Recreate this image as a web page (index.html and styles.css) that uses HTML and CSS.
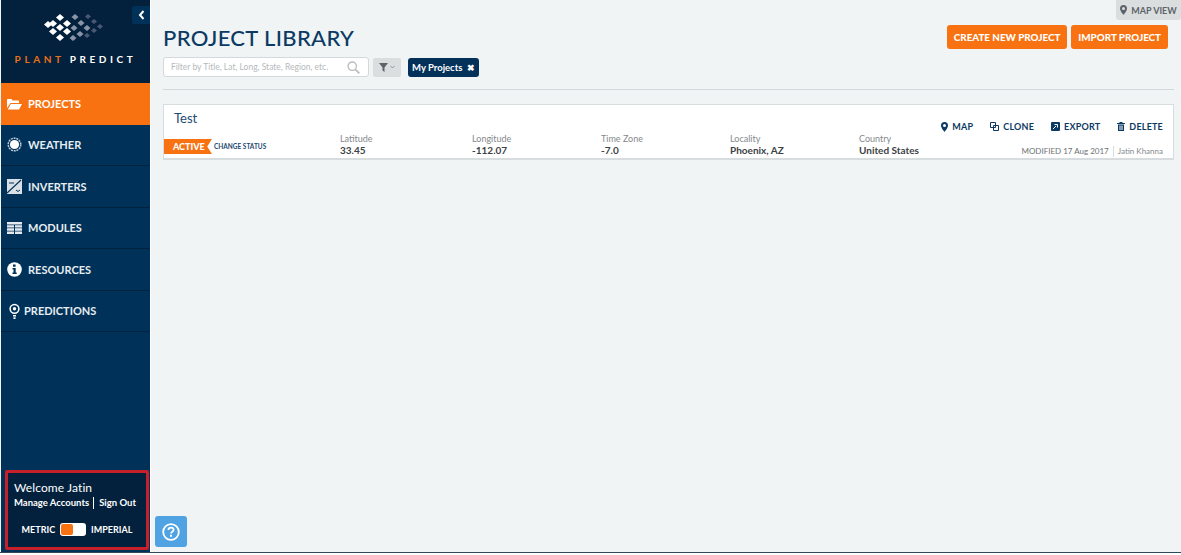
FILE: index.html
```html
<!DOCTYPE html>
<html lang="en">

<head>
    <meta charset="UTF-8">
    <title>Project Library</title>
    <link rel="stylesheet" href="styles.css">
</head>

<body>
    <div class="wrapper">
        <aside class="sidebar">
            <div class="logoArea">
                <button class="collapseBtn">
                    <svg width="7" height="10" viewBox="0 0 7 10"><path d="M5.5 1 2 5l3.500 4" fill="none" stroke="#fff" stroke-width="2"/></svg>
                </button>
                <svg class="logoMark" width="62" height="27" viewBox="0 0 62 27">
                    <g fill="#fff">
                        <path d="M16 0l4 3.500-4 3.500-4-3.500z"/>
                        <path d="M9 6l4 3.500-4 3.500-4-3.500z"/>
                        <path d="M23 6l4 3.500-4 3.500-4-3.500z"/>
                        <path d="M4 10l4 3.500-4 3.500-4-3.500z" transform="translate(-0 -3)"/>
                        <path d="M16 7l4 3.500-4 3.500-4-3.500z" transform="translate(0 3)"/>
                        <path d="M9 14l4 3.500-4 3.500-4-3.500z"/>
                        <path d="M23 14l4 3.500-4 3.500-4-3.500z"/>
                        <path d="M16 20l4 3.500-4 3.500-4-3.500z"/>
                    </g>
                    <g fill="#8a94a8">
                        <path d="M31 0l3.500 3-3.500 3-3.500-3z"/>
                        <path d="M37 6l3.500 3-3.500 3-3.500-3z"/>
                        <path d="M30 11l3.500 3-3.500 3-3.500-3z"/>
                        <path d="M43 11l3.500 3-3.500 3-3.500-3z"/>
                        <path d="M36 17l3.500 3-3.500 3-3.500-3z"/>
                        <path d="M29 21l3.500 3-3.500 3-3.500-3z"/>
                    </g>
                    <g fill="#4c5873">
                        <path d="M44 0l3 2.500-3 2.500-3-2.500z"/>
                        <path d="M50 5l3 2.500-3 2.500-3-2.500z"/>
                        <path d="M56 10l3 2.500-3 2.500-3-2.500z"/>
                        <path d="M50 14l3 2.500-3 2.500-3-2.500z"/>
                        <path d="M43 19l3 2.500-3 2.500-3-2.500z"/>
                    </g>
                </svg>
                <div class="logoText"><span class="logoOrange">PLANT</span><span>PREDICT</span></div>
            </div>
            <nav>
                <a class="navItem active">
                    <svg class="navIcon" width="15" height="12" viewBox="0 0 15 12"><path d="M0 2c0-.6.4-1 1-1h3.500l1 1.500H11c.6 0 1 .4 1 1V5H3.500L0 10z" fill="#fff"/><path d="M3.900 6H15l-3 5.500H.8z" fill="#fff"/></svg>
                    PROJECTS
                </a>
                <a class="navItem">
                    <svg class="navIcon" width="15" height="15" viewBox="0 0 15 15"><circle cx="7.500" cy="7.500" r="4.600" fill="#fff"/><circle cx="7.500" cy="7.500" r="6.300" fill="none" stroke="#c5d0da" stroke-width="1.400" stroke-dasharray="2 .8"/></svg>
                    WEATHER
                </a>
                <a class="navItem">
                    <svg class="navIcon" width="15" height="15" viewBox="0 0 15 15"><rect width="15" height="15" fill="#d9e0e6"/><path d="M0 14 14 1" stroke="#003259" stroke-width="1.200"/><path d="M2 4h5M9 11l2 1.500 2-1.500" stroke="#003259" fill="none"/></svg>
                    INVERTERS
                </a>
                <a class="navItem">
                    <svg class="navIcon" width="15" height="12" viewBox="0 0 15 12"><g fill="#e4e9ee"><path d="M0 0h15v2.500H0zM0 3.200h7v2.400H0zM8 3.200h7v2.400H8zM0 6.300h7v2.400H0zM8 6.300h7v2.400H8zM0 9.400h7V12H0zM8 9.400h7V12H8z"/></g></svg>
                    MODULES
                </a>
                <a class="navItem">
                    <svg class="navIcon" width="15" height="15" viewBox="0 0 15 15"><circle cx="7.500" cy="7.500" r="7.300" fill="#fff"/><path d="M6 2.600h2.600v2.200H6zM5.500 6h3.200v4.400h1v1.500H5.500v-1.500h1V7.500h-1z" fill="#003259"/></svg>
                    RESOURCES
                </a>
                <a class="navItem predictions">
                    <svg class="navIcon" width="11" height="16" viewBox="0 0 11 16"><circle cx="5.500" cy="5.800" r="4.400" fill="none" stroke="#fff" stroke-width="1.500"/><circle cx="5.500" cy="5.800" r="1.700" fill="#fff"/><path d="M4 12h3v1.500H4zM4.500 14.200h2V16h-2z" fill="#fff"/></svg>
                    PREDICTIONS
                </a>
            </nav>
            <div class="accountBox">
                <div class="welcome">Welcome Jatin</div>
                <div class="accountLinks"><a>Manage Accounts</a><a class="signOut">Sign Out</a></div>
                <div class="unitRow">
                    <span>METRIC</span>
                    <span class="unitSwitch"><i class="unitKnob"></i></span>
                    <span>IMPERIAL</span>
                </div>
            </div>
        </aside>

        <main class="content">
            <a class="mapView">
                <svg width="7" height="10" viewBox="0 0 7 10"><path fill-rule="evenodd" d="M3.500 0A3.500 3.500 0 0 1 7 3.500C7 6 3.500 10 3.500 10S0 6 0 3.500A3.500 3.500 0 0 1 3.500 0zm0 2a1.500 1.500 0 1 0 0 3 1.500 1.500 0 0 0 0-3z" fill="#5d6469"/></svg>
                MAP VIEW
            </a>
            <header class="topArea">
                <div class="titleArea">
                    <h1>PROJECT LIBRARY</h1>
                    <div class="filterRow">
                        <div class="searchBox">
                            <span>Filter by Title, Lat, Long, State, Region, etc.</span>
                            <svg width="13" height="13" viewBox="0 0 13 13"><circle cx="5.200" cy="5.200" r="4.200" fill="none" stroke="#b9bdc0" stroke-width="1.300"/><path d="M8.300 8.300 12.300 12.300" stroke="#b9bdc0" stroke-width="1.800"/></svg>
                        </div>
                        <button class="filterBtn">
                            <svg width="9" height="9" viewBox="0 0 9 9"><path d="M0 0h9L5.500 4.500V9l-2-1.500v-3z" fill="#5d6469"/></svg>
                            <svg width="5" height="4" viewBox="0 0 5 4"><path d="M.5 1l2 2 2-2" fill="none" stroke="#7c8388" stroke-width=".8"/></svg>
                        </button>
                        <span class="tag">My Projects <b>✖</b></span>
                    </div>
                </div>
                <div class="actions">
                    <button class="orangeBtn">CREATE NEW PROJECT</button>
                    <button class="orangeBtn">IMPORT PROJECT</button>
                </div>
            </header>
            <hr class="divider">

            <article class="projectCard">
                <div class="cardTop">
                    <h2>Test</h2>
                    <div class="cardLinks">
                        <a><svg width="7" height="10" viewBox="0 0 7 10"><path fill-rule="evenodd" d="M3.500 0A3.500 3.500 0 0 1 7 3.500C7 6 3.500 10 3.500 10S0 6 0 3.500A3.500 3.500 0 0 1 3.500 0zm0 2a1.500 1.500 0 1 0 0 3 1.500 1.500 0 0 0 0-3z" fill="#0b3a63"/></svg>MAP</a>
                        <a><svg width="9" height="9" viewBox="0 0 9 9"><path d="M.5.5h5v5h-5zM3.500 3.500h5v5h-5z" fill="none" stroke="#0b3a63"/></svg>CLONE</a>
                        <a><svg width="9" height="9" viewBox="0 0 9 9"><rect width="9" height="9" rx="1" fill="#0b3a63"/><path d="M2 7l3-3M3.500 2.500H6.500V5.500" stroke="#fff" fill="none"/></svg>EXPORT</a>
                        <a><svg width="8" height="9" viewBox="0 0 8 9"><path d="M0 1h8v1H0zM2.500 0h3v1h-3zM1 2.500h6V9H1zM2.500 3.500v4.500h1V3.500zM4.500 3.500v4.500h1V3.500z" fill="#0b3a63" fill-rule="evenodd"/></svg>DELETE</a>
                    </div>
                </div>
                <div class="cardBottom">
                    <div class="statusArea">
                        <span class="activeFlag">ACTIVE</span>
                        <a class="changeStatus">CHANGE STATUS</a>
                    </div>
                    <div class="field latitude"><label>Latitude</label><strong>33.45</strong></div>
                    <div class="field longitude"><label>Longitude</label><strong>-112.07</strong></div>
                    <div class="field timezone"><label>Time Zone</label><strong>-7.0</strong></div>
                    <div class="field locality"><label>Locality</label><strong>Phoenix, AZ</strong></div>
                    <div class="field country"><label>Country</label><strong>United States</strong></div>
                    <div class="modified">MODIFIED 17 Aug 2017<span class="owner">Jatin Khanna</span></div>
                </div>
            </article>
        </main>

        <button class="helpBtn">
            <svg width="18" height="18" viewBox="0 0 18 18"><circle cx="9" cy="9" r="7.800" fill="none" stroke="#fff" stroke-width="1.800"/><path d="M6.400 7c0-1.600 1.200-2.400 2.600-2.400s2.600.8 2.600 2.200c0 2-2.500 1.900-2.500 3.700" fill="none" stroke="#fff" stroke-width="1.700"/><path d="M8 11.700h2v2H8z" fill="#fff"/></svg>
        </button>
    </div>
</body>

</html>
```

FILE: styles.css
```css
* {
    margin: 0;
    padding: 0;
    box-sizing: border-box;
}

body {
    width: 100vw;
    height: 100vh;
    overflow: hidden;
    background: #fff;
    font-family: "Lato", "Liberation Sans", sans-serif;
}

.wrapper {
    position: relative;
    display: flex;
    height: 553px;
    background: #f0f4f5;
    border-bottom: 1px solid #33475a;
}

a {
    cursor: pointer;
}

button {
    border: none;
    cursor: pointer;
    font-family: inherit;
}

/* sidebar */
.sidebar {
    width: 150px;
    margin-left: 1px;
    flex-shrink: 0;
    display: flex;
    flex-direction: column;
    background: #003259;
    border-right: 1px solid #fff;
}

.logoArea {
    position: relative;
    height: 83px;
    background: #03213d;
    display: flex;
    flex-direction: column;
    align-items: center;
    padding-top: 14px;
}

.collapseBtn {
    position: absolute;
    top: 6px;
    right: 0;
    width: 18px;
    height: 18px;
    background: #003259;
    border-radius: 2px 0 0 2px;
    display: flex;
    align-items: center;
    justify-content: center;
}

.logoMark {
    margin-right: 1px;
}

.logoText {
    margin-top: 12px;
    font-size: 10px;
    font-weight: 700;
    letter-spacing: 3.6px;
    color: #fff;
    white-space: nowrap;
}

.logoOrange {
    color: #e8701a;
    margin-right: 5px;
}

.navItem {
    height: 41.5px;
    padding-left: 6px;
    display: flex;
    align-items: center;
    gap: 6px;
    font-size: 11px;
    font-weight: 700;
    color: #e6edf2;
    border-bottom: 1px solid #02233f;
}

.navItem.active {
    background: #f87211;
    color: #fff;
    border-bottom: none;
}

.predictions {
    padding-left: 8px;
    gap: 4px;
}

.navIcon {
    flex-shrink: 0;
}

.accountBox {
    margin: auto 0 2px 4px;
    width: 144px;
    height: 80px;
    padding: 7px 7px 0 6px;
    background: #03213d;
    border: 3px solid #c8202a;
    border-radius: 2px;
    color: #fff;
}

.welcome {
    font-size: 12px;
    line-height: 15px;
    letter-spacing: .1px;
}

.accountLinks {
    margin-top: 2px;
    display: flex;
    font-size: 9.500px;
    font-weight: 700;
    line-height: 12px;
}

.signOut {
    margin-left: 4px;
    padding-left: 5px;
    border-left: 1px solid #fff;
}

.unitRow {
    margin-top: 14px;
    padding-left: 1px;
    display: flex;
    align-items: center;
    justify-content: center;
    gap: 5px;
    font-size: 9px;
    font-weight: 700;
}

.unitSwitch {
    width: 26px;
    height: 13px;
    background: #fff;
    border-radius: 3px;
    padding: 1px;
}

.unitKnob {
    display: block;
    width: 12px;
    height: 11px;
    background: #f87211;
    border-radius: 2px;
}

/* main area */
.content {
    position: relative;
    flex: 1;
    padding: 25px 7px 0 12px;
}

.mapView {
    position: absolute;
    top: 0;
    right: 0;
    width: 65px;
    height: 20px;
    display: flex;
    align-items: center;
    justify-content: center;
    gap: 4px;
    background: #dadedf;
    border-radius: 0 0 3px 3px;
    font-size: 9px;
    font-weight: 700;
    color: #5d6469;
}

.topArea {
    display: flex;
    justify-content: space-between;
    align-items: flex-start;
    padding-right: 6px;
}

h1 {
    font-size: 22px;
    font-weight: 500;
    line-height: 26px;
    color: #0b3a63;
    letter-spacing: .35px;
}

.filterRow {
    margin-top: 6px;
    display: flex;
    align-items: center;
}

.searchBox {
    width: 206px;
    height: 20px;
    padding: 0 8px 0 7px;
    display: flex;
    align-items: center;
    justify-content: space-between;
    background: #fff;
    border: 1px solid #d4d9db;
    border-radius: 3px;
    font-size: 8.500px;
    color: #b5b9bc;
}

.filterBtn {
    width: 28px;
    height: 19px;
    margin-left: 4px;
    display: flex;
    align-items: center;
    justify-content: center;
    gap: 2px;
    background: #dadedf;
    border-radius: 2px;
}

.tag {
    height: 19px;
    margin-left: 7px;
    padding: 0 4px;
    display: flex;
    align-items: center;
    gap: 5px;
    background: #03315a;
    border-radius: 3px;
    font-size: 9.500px;
    font-weight: 700;
    color: #fff;
}

.tag b {
    font-size: 9px;
}

.actions {
    display: flex;
    gap: 4px;
}

.orangeBtn {
    height: 24px;
    padding: 0 7px;
    background: #f87211;
    border-radius: 3px;
    font-size: 9.800px;
    font-weight: 900;
    color: #fff;
}

.divider {
    margin: 12px 0 14px;
    border: none;
    border-top: 1px solid #d3d8da;
}

.projectCard {
    height: 56px;
    background: #fff;
    border: 1px solid #d7dcde;
    border-bottom-width: 2px;
}

.cardTop {
    height: 24px;
    padding: 0 10px 0 10px;
    display: flex;
    justify-content: space-between;
    align-items: flex-end;
}

h2 {
    font-size: 13px;
    font-weight: 400;
    line-height: 22px;
    color: #1f4a70;
}

.cardLinks {
    display: flex;
    gap: 17px;
    margin-bottom: -3px;
}

.cardLinks a {
    display: flex;
    align-items: center;
    gap: 4px;
    font-size: 9px;
    font-weight: 700;
    letter-spacing: .2px;
    color: #0b3a63;
}

.cardBottom {
    display: flex;
    margin-top: 2px;
}

.statusArea {
    width: 176px;
    display: flex;
    align-items: center;
    padding-top: 5px;
}

.activeFlag {
    width: 48px;
    height: 15px;
    padding-left: 9px;
    background: #f87211;
    clip-path: polygon(0 0, 100% 0, 90% 50%, 100% 100%, 0 100%);
    font-size: 9px;
    font-weight: 900;
    line-height: 15px;
    color: #fff;
}

.changeStatus {
    margin-left: 2px;
    font-size: 6.500px;
    font-weight: 700;
    color: #1f4a70;
}

.field {
    display: flex;
    flex-direction: column;
    padding-top: 3px;
}

.field label {
    font-size: 9px;
    line-height: 10px;
    color: #85898c;
}

.field strong {
    font-size: 10px;
    line-height: 13px;
    font-weight: 700;
    color: #3d4245;
}

.latitude {
    width: 132px;
}

.longitude {
    width: 129px;
}

.timezone {
    width: 129px;
}

.locality {
    width: 129px;
}

.country {
    width: 120px;
}

.modified {
    flex: 1;
    padding: 15px 10px 0 0;
    display: flex;
    justify-content: flex-end;
    white-space: nowrap;
    font-size: 8px;
    line-height: 10px;
    color: #6d7275;
}

.owner {
    margin-left: 4px;
    padding-left: 4px;
    border-left: 1px solid #d7dcde;
    color: #85898c;
}

.helpBtn {
    position: absolute;
    left: 155px;
    top: 516px;
    width: 32px;
    height: 31px;
    display: flex;
    align-items: center;
    justify-content: center;
    background: #4fa3e3;
    border-radius: 3px;
}
```
